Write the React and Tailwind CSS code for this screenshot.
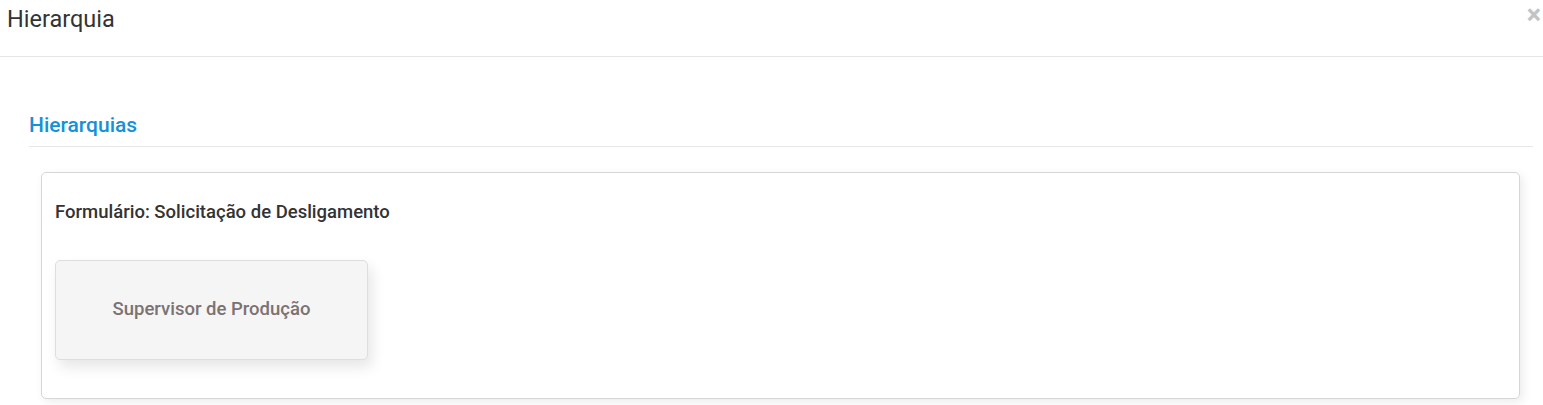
export default function App() {
  return (
    <div className="w-[1543px] h-[405px] overflow-hidden bg-white font-['Roboto',sans-serif] text-[#333]">
      {/* Modal header */}
      <div className="flex items-start justify-between h-[57px] border-b border-[#e5e5e5] pl-[7px] pr-[2px]">
        <h4 className="text-[23.5px] leading-[28px] mt-[5px] font-normal">Hierarquia</h4>
        <button className="text-[#c3c3c3] text-[27px] font-bold leading-none mt-[2px]">×</button>
      </div>

      {/* Modal body */}
      <div className="pl-[29px] pr-[10px] pt-[55px]">
        <div className="border-b border-[#e8e8e8] pb-[7px]">
          <h3 className="text-[#1591d8] text-[21px] leading-[27px] font-medium">Hierarquias</h3>
        </div>

        <div className="mt-[25px] ml-[12px] mr-[13px] h-[227px] border border-[#d6d6d6] rounded-[5px] shadow-[3px_3px_10px_rgba(0,0,0,0.08)] px-[13px] pt-[28px]">
          <p className="text-[18.5px] leading-[22px] font-medium text-[#333]">Formulário: Solicitação de Desligamento</p>
          <div className="mt-[37px] w-[313px] h-[100px] flex items-center justify-center bg-[#f6f5f5] border border-[#dedede] rounded-[5px] shadow-[4px_7px_14px_rgba(0,0,0,0.1)]">
            <span className="text-[18.5px] font-medium text-[#7b7272]">Supervisor de Produção</span>
          </div>
        </div>
      </div>
    </div>
  );
}
